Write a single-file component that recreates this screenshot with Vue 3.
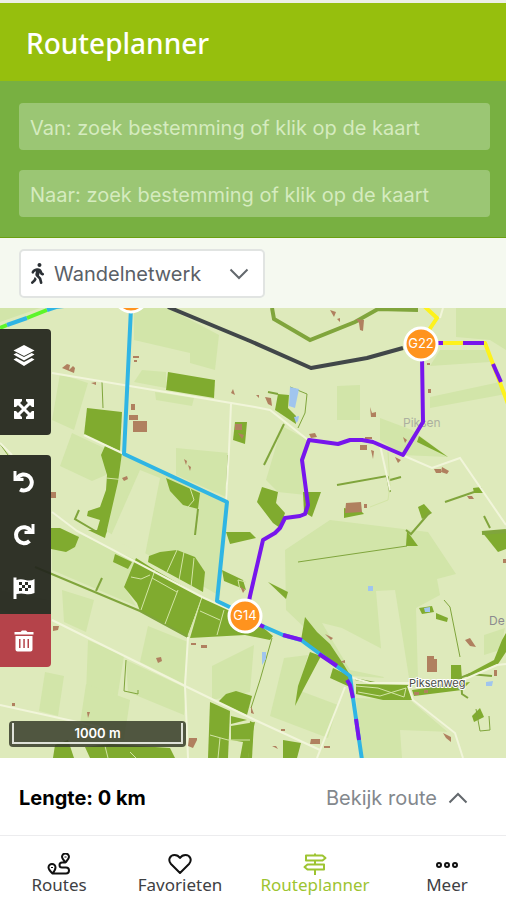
<template>
  <div class="app">
    <header class="app-header">
      <h1>Routeplanner</h1>
    </header>

    <form class="search" @submit.prevent>
      <input v-model="van" type="text" aria-label="Van" placeholder="Van: zoek bestemming of klik op de kaart">
      <input v-model="naar" type="text" aria-label="Naar" placeholder="Naar: zoek bestemming of klik op de kaart">
    </form>

    <div class="filter-bar">
      <div class="network">
        <svg class="walk-icon" viewBox="0 0 320 512" aria-hidden="true">
          <path d="M208 96c26.500 0 48-21.500 48-48S234.500 0 208 0s-48 21.500-48 48 21.500 48 48 48zm94.500 149.100l-23.300-11.800-9.700-29.400c-14.700-44.600-55.700-75.800-102.200-75.900-36-.1-55.900 10.100-93.300 25.200-21.600 8.700-39.300 25.200-49.700 46.200L17.600 213c-7.800 15.800-1.500 35 14.200 42.900 15.600 7.900 34.600 1.500 42.500-14.300L81 228c3.500-7 9.300-12.500 16.500-15.400l26.800-10.800-15.200 60.700c-5.200 20.800.4 42.900 14.900 58.800l59.900 65.400c7.200 7.900 12.300 17.400 14.900 27.700l18.300 73.300c4.300 17.100 21.700 27.600 38.800 23.300 17.100-4.300 27.600-21.700 23.300-38.800l-22.200-89c-2.600-10.300-7.700-19.900-14.900-27.700l-45.500-49.700 17.200-68.700 5.500 16.500c5.300 16.100 16.700 29.400 31.700 37l23.300 11.800c15.600 7.900 34.600 1.500 42.500-14.300 7.700-15.700 1.400-35.100-14.300-43zM73.600 385.800c-3.200 8.100-8 15.400-14.200 21.500l-50 50.100c-12.500 12.500-12.500 32.800 0 45.300s32.700 12.500 45.200 0l59.400-59.400c6.100-6.100 10.900-13.400 14.200-21.500l13.500-33.800c-55.300-60.300-38.700-41.800-47.400-53.700l-20.700 51.500z" />
        </svg>
        <select v-model="netwerk" aria-label="Netwerk">
          <option>Wandelnetwerk</option>
          <option>Fietsnetwerk</option>
        </select>
        <svg class="chevron" viewBox="0 0 20 12" aria-hidden="true"><path d="M1.500 1.500 10 10l8.500-8.500" /></svg>
      </div>
    </div>

    <main class="map">
      <svg class="map-canvas" viewBox="0 308 506 450" preserveAspectRatio="xMidYMid slice" role="img" aria-label="Kaart">
        <polygon v-for="p in velden" :key="p" class="veld" :points="p" />
        <polygon v-for="p in lichteVelden" :key="p" class="veld-licht" :points="p" />
        <polygon v-for="p in bossen" :key="p" class="bos" :points="p" />
        <polyline v-for="h in hagen" :key="h.p" class="haag" :points="h.p" :stroke-width="h.w" />
        <polyline v-for="p in paden" :key="p" class="pad" :points="p" />
        <polyline v-for="p in wegen" :key="p" class="weg" :points="p" />
        <polygon v-for="p in water" :key="p" class="water" :points="p" />
        <path v-for="g in gebouwen" :key="g" class="gebouw" :d="g" />

        <text class="plaats vaag" x="403" y="427">Piksen</text>
        <text class="plaats" x="489" y="625">De</text>
        <text class="straat" x="409" y="687">Piksenweg</text>

        <polyline v-for="r in routes" :key="r.p" class="route" :class="r.kleur" :points="r.p" />

        <g v-for="k in knooppunten" :key="k.x" class="knooppunt">
          <circle :cx="k.x" :cy="k.y" r="16" />
          <text :x="k.x" :y="k.y + 4">{{ k.naam }}</text>
        </g>
      </svg>

      <div class="tools">
        <div class="tool-group">
          <button type="button" aria-label="Kaartlagen">
            <svg viewBox="0 0 22 22">
              <path d="M11 0 21.500 5.500 11 11 .5 5.500z" />
              <path d="m.5 9.500 2.800-1.400L11 12l7.700-3.900 2.800 1.400L11 15.500z" />
              <path d="m.5 14.500 2.800-1.400L11 17l7.700-3.900 2.800 1.400L11 21z" />
            </svg>
          </button>
          <button type="button" aria-label="Volledig scherm">
            <svg viewBox="0 0 22 22">
              <path d="M1.500 1H9v2L3 9H1V1.500zM13 1h7.500l.5.500V9h-2l-6-6zM1 13h2l6 6v2H1.500L1 20.500zM19 13h2v7.500l-.5.500H13v-2z" />
              <path class="cross" d="m4 4 14 14M18 4 4 18" />
            </svg>
          </button>
        </div>
        <div class="tool-group">
          <button type="button" aria-label="Ongedaan maken">
            <svg viewBox="0 0 22 22">
              <path class="arc" d="M4.500 6.500A8 8 0 1 1 7 18.500" />
              <path d="M.5 0v10h10V7L5 6.500 3.500 5V0z" />
            </svg>
          </button>
          <button type="button" aria-label="Opnieuw">
            <svg viewBox="0 0 22 22">
              <path class="arc" d="M17.500 6.500A8 8 0 1 0 16.500 17" />
              <path d="M21.500 0v10h-10V7L17 6.500 18.500 5V0z" />
            </svg>
          </button>
          <button type="button" aria-label="Route voltooien">
            <svg viewBox="0 0 22 22">
              <path d="M.5.500h3V3q4-1.500 9 0t9-1v14q-5 2-9 1t-9 0v5h-3z" />
              <path class="checks" d="M6 5h3v3H6zM12 5h3v3h-3zM9 8h3v3H9zM15 8h3v3h-3zM6 11h3v3H6zM12 11h3v3h-3z" />
            </svg>
          </button>
          <button type="button" class="danger" aria-label="Wis route">
            <svg viewBox="0 0 22 22">
              <path d="M1.500 2h6L9 .5h4L14.500 2h6v2.500h-19z" />
              <path fill-rule="evenodd" d="M2.500 6h17v13.500q0 2-2 2h-13q-2 0-2-2zM6 9v9h1.500V9zm4.300 0v9h1.500V9zm4.200 0v9H16V9z" />
            </svg>
          </button>
        </div>
      </div>

      <div class="scale"><span>1000 m</span></div>
    </main>

    <section class="summary">
      <strong>Lengte: {{ lengte }} km</strong>
      <button type="button">
        Bekijk route
        <svg class="chevron" viewBox="0 0 20 12" aria-hidden="true"><path d="M1.500 10.500 10 2l8.500 8.500" /></svg>
      </button>
    </section>

    <nav class="tabs">
      <a href="#routes">
        <svg viewBox="0 0 24 22" aria-hidden="true">
          <path d="M18.500 9.500c-2-2.500-3.500-4-3.500-5.500a3.500 3.500 0 0 1 7 0c0 1.500-1.500 3-3.500 5.500zM5.500 20.500C3 18 1.500 16.500 1.500 14.500a3.500 3.500 0 0 1 7 0c0 2-1 3.500-3 6zH19a3 3 0 0 0 0-6h-4a2.500 2.500 0 0 1 0-5h3.500" />
          <path d="M18.500 3.500v1M5 14v1" />
        </svg>
        <span>Routes</span>
      </a>
      <a href="#favorieten">
        <svg viewBox="0 0 24 22" aria-hidden="true">
          <path d="M12 20 3 11C-.5 7 2 2 6.500 2 9 2 11 3.500 12 5c1-1.500 3-3 5.500-3C22 2 24.500 7 21 11z" />
        </svg>
        <span>Favorieten</span>
      </a>
      <a href="#routeplanner" class="active">
        <svg viewBox="0 0 24 22" aria-hidden="true">
          <path d="M3 2.500h16.500L22.500 5l-3 2.500H3zM21 11.500H4.500l-3 2.500 3 2.500H21zM12 .5v2M12 7.500v4M12 16.500V22" />
        </svg>
        <span>Routeplanner</span>
      </a>
      <a href="#meer">
        <svg viewBox="0 0 24 22" aria-hidden="true">
          <circle cx="4" cy="12" r="2" /><circle cx="12" cy="12" r="2" /><circle cx="20" cy="12" r="2" />
        </svg>
        <span>Meer</span>
      </a>
    </nav>
  </div>
</template>

<script setup>
import { ref } from 'vue'

const van = ref('')
const naar = ref('')
const netwerk = ref('Wandelnetwerk')
const lengte = ref(0)

const knooppunten = [
  { x: 131, y: 296, naam: '' },
  { x: 421, y: 344, naam: 'G22' },
  { x: 245, y: 616, naam: 'G14' }
]

const velden = [
  '134,308 168,308 219,335 215,370 190,363 190,353 134,340',
  '456,308 506,308 506,350 490,340 456,337',
  '440,350 488,350 490,362 430,366',
  '430,397 500,382 506,394 430,408',
  '337,386 360,385 360,420 337,420',
  '142,370 166,372 166,388 134,382',
  '155,392 194,398 192,406 156,400',
  '60,374 88,383 74,430 52,420',
  '72,433 104,448 106,475 92,481 60,466',
  '176,448 229,453 226,497 176,475',
  '380,418 412,430 448,457 402,455 380,440',
  '282,426 308,440 302,460 306,495 278,492 266,480',
  '122,455 226,502 220,596 150,556 106,531',
  '0,308 40,308 0,322',
  '80,534 136,560 124,586 136,606 52,570 52,545',
  '285,550 330,520 428,532 456,574 437,579 440,595 416,608 418,680 352,676 305,628 286,610',
  '62,590 94,600 86,632 64,622',
  '148,626 188,642 184,684 140,662',
  '88,640 124,656 116,706 86,694',
  '45,672 64,676 58,716 39,711',
  '86,684 130,700 124,740 80,724',
  '126,660 186,688 184,715 128,692',
  '212,666 254,645 250,692 212,700',
  '356,698 410,700 450,734 455,758 362,758',
  '284,658 308,655 298,690 338,705 328,738 270,716',
  '484,635 505,628 500,650 484,655',
  '0,610 50,628 50,600 0,590'
]

const lichteVelden = [
  '376,591 395,590 410,684 384,682',
  '322,623 342,628 384,650 384,677 350,670',
  '400,730 452,732 462,758 402,758',
  '140,470 160,478 145,555 110,538'
]

const bossen = [
  '168,372 215,380 214,398 166,390',
  '87,408 122,412 120,451 84,435',
  '105,446 122,453 118,482 106,534 97,530 100,520 87,516 88,511 100,507 106,490 107,475 101,455',
  '166,478 200,493 198,509 183,505 170,491',
  '235,422 247,422 245,444 233,440',
  '51,528 60,528 79,537 75,547 66,552 51,549',
  '88,530 107,530 105,538',
  '115,554 132,562 128,569 113,562',
  '136,558 155,570 202,597 187,637 140,611 137,603 124,587',
  '149,556 160,552 177,550 195,557 205,572 203,592 148,562',
  '202,597 234,610 260,625 273,636 270,640 245,635 190,638',
  '222,570 243,580 246,590 224,581',
  '226,532 250,532 256,538 230,544',
  '218,702 226,694 236,691 252,696 247,715',
  '210,702 230,711 228,758 208,758',
  '231,716 247,720 231,724',
  '231,726 255,722 251,740 248,758 240,758 243,742 231,740',
  '55,745 68,740 74,758 53,758',
  '85,747 110,744 170,748 175,758 90,758',
  '268,582 288,592 286,599',
  '305,617 317,632 330,644 344,665 350,675 330,662 301,640',
  '310,652 321,656 303,690 295,706 298,686',
  '333,668 352,677 350,687 330,678',
  '356,684 408,685 412,700 383,700 356,694',
  '412,690 470,682 462,690 414,696',
  '407,531 418,546 406,546',
  '482,532 506,531 506,549 498,552',
  '419,608 432,606 434,612 422,614',
  '436,613 448,618 447,622 436,619',
  '506,633 506,652 498,664 468,677 464,676 494,660 502,640',
  '451,665 461,665 462,680 451,680',
  '283,740 301,743 297,758 283,758',
  '250,721 254,723 252,758 248,758',
  '472,716 480,708 484,717 474,722',
  '278,394 289,395 288,408 296,416 296,424 275,410',
  '262,487 278,492 276,503 285,513 280,528 273,523 257,502',
  '303,492 321,492 312,517 304,512',
  '419,436 448,457 417,442',
  '344,508 362,512 364,514 344,518',
  '418,507 424,504 432,513 422,519',
  '473,488 481,487 484,493 474,493'
]

const hagen = [
  { p: '272,308 274,319 310,340 355,322 378,309 418,310', w: 4 },
  { p: '268,392 278,394', w: 2 },
  { p: '290,387 307,394 305,413 298,428', w: 1 },
  { p: '284,424 264,465', w: 2 },
  { p: '337,485 387,476 390,480 401,477', w: 2 },
  { p: '387,476 390,492', w: 2 },
  { p: '445,502 474,492', w: 2 },
  { p: '430,512 411,534 406,530', w: 2 },
  { p: '484,516 490,528', w: 2 },
  { p: '482,533 506,531', w: 4 },
  { p: '298,562 407,546', w: 1 },
  { p: '444,600 450,607 460,657', w: 1 },
  { p: '35,567 140,611 188,637', w: 2 },
  { p: '102,578 96,591', w: 2 },
  { p: '126,660 124,691 138,694 138,690', w: 1 },
  { p: '102,382 103,408', w: 1 },
  { p: '228,455 226,499', w: 1 },
  { p: '198,509 195,535', w: 2 },
  { p: '79,510 75,519 97,532', w: 2 },
  { p: '272,638 260,680 251,708', w: 1 },
  { p: '355,679 375,683', w: 2 },
  { p: '476,709 480,731 490,730 489,716', w: 1 },
  { p: '461,678 462,694 468,698', w: 2 },
  { p: '0,444 8,455', w: 1 },
  { p: '424,692 470,674 492,676', w: 2 }
]

const paden = [
  '177,550 167,572',
  '184,552 179,580',
  '194,558 191,587',
  '131,577 141,579 150,575',
  '155,570 141,610',
  '152,578 177,592',
  '178,590 165,624',
  '202,597 188,637',
  '200,611 220,620',
  '224,610 217,635',
  '356,686 378,688 404,697 406,688 380,696 358,692',
  '210,735 228,740 250,740',
  '220,738 218,758',
  '106,478 126,480',
  '190,488 194,500 188,507',
  '105,746 108,758',
  '130,752 136,758',
  '388,452 390,485 388,500 370,507',
  '240,590 238,580 246,582'
]

const wegen = [
  '52,373 255,407 270,410 308,440',
  '84,435 124,454',
  '402,455 432,468 460,458 506,525',
  '380,445 390,490',
  '231,404 229,450 226,500',
  '52,512 77,531 202,597 235,612',
  '52,620 185,686 255,720 320,750',
  '188,637 185,686 188,758',
  '0,705 100,727',
  '345,687 317,758',
  '350,677 370,683 408,683 463,680 497,665 506,664',
  '408,686 413,700 455,733 463,758',
  '378,445 373,440',
  '440,318 443,308',
  '0,443 12,455'
]

const water = [
  '290,387 299,389 295,408 289,406',
  '294,417 299,416 298,421 296,423',
  '368,586 373,586 373,591 368,591',
  '424,608 430,607 430,612 425,612',
  '262,652 266,652 266,659 262,665',
  '486,682 493,681 492,686 486,686'
]

const gebouwen = [
  'M133 421h14v11h-14zM129 415h9v5h-9zM131 404h4v6h-4z',
  'M133 356h6v2h-6zM134 360h3v2h-3z',
  'M62 368l5-4 3 1-1 5 4-4 2 2-1 5zM91 383l5-1v3z',
  'M235 424h7v6h-7zM238 433l6 2-2 4z',
  'M184 459l3 2-1 4zM188 465l3 2-1 4z',
  'M122 478l5-2 1 3-4 2zM50 492h6v6h-5zM231 393l2-4 2 6z',
  'M330 310l6 2-2 5zM356 319l8 1-1 11-3-1-1-7zM337 319l3-1v4z',
  'M265 397l6 1 1 8-4-2zM256 395h3v3z',
  'M370 407l2 6 4-1v5h-5z',
  'M346 503l15-1 1 10-17 1zM364 504h3v4h-3z',
  'M309 434l6-1 2 4-6 1zM360 445h7v5h-7zM371 450l3 1-1 8zM365 437h7v2h-7z',
  'M403 437l4 3-2 3zM395 457l6 3-3 3zM428 389h3v4h-3zM427 363h3v2h-3z',
  'M434 469h7v4h-5zM442 467l7 4-2 3-6-2zM467 496h5l2 3h-5z',
  'M427 656h7v3h3v13h-10zM414 692h5v3h-5zM424 690h4v3h-4z',
  'M465 640l5-2 4 6 2 3-6-1zM494 670h3v6h-3z',
  'M321 628l3 3M325 634l8 4-2 2zM340 662l5-2v3z',
  'M191 643h5v2h-5zM201 645h6v3h-6zM156 658l5-1 1 4-4 2z',
  'M189 738h8v2l-4 8-5-2z',
  'M311 739h9v5h-10zM324 746h6v2h-6z',
  'M443 733l8 4v5l-5-4zM281 729h4v2h-4zM272 746h4l2 3z',
  'M53 626h6l-1 4-5 1zM81 712l3 6M87 712h3l-2 6zM12 703h3v3h-3z',
  'M240 586l5 4-2 3zM251 706l3 8-3-1zM503 559h3v4h-3z'
]

const routes = [
  { kleur: 'groen', p: '0,328 7,325' },
  { kleur: 'cyaan', p: '7,325 27,318' },
  { kleur: 'groen', p: '27,318 47,310' },
  { kleur: 'cyaan', p: '47,310 56,307 64,306' },
  { kleur: 'donker', p: '168,307 250,341 311,368 367,358 403,348' },
  { kleur: 'cyaan', p: '131,308 124,454 227,502 217,601 240,612' },
  { kleur: 'paars', p: '422,356 423,422 403,455 373,442 362,440 350,440 338,444 309,440 302,460 308,505 305,514 300,516 285,518 280,528 275,533 263,540 250,596 248,606' },
  { kleur: 'geel', p: '424,306 437,318 429,330' },
  { kleur: 'geel', p: '436,343 485,343 508,404' },
  { kleur: 'paars', p: '438,343 443,343' },
  { kleur: 'paars', p: '463,343 484,343' },
  { kleur: 'paars', p: '493,364 501,382' },
  { kleur: 'cyaan', p: '258,624 283,635 301,640 350,676 353,698 362,760' },
  { kleur: 'paars', p: '258,624 264,627' },
  { kleur: 'paars', p: '283,635 302,640' },
  { kleur: 'paars', p: '319,654 337,666' },
  { kleur: 'paars', p: '347,680 350,685 353,698' },
  { kleur: 'paars', p: '356,719 359,740' }
]
</script>

<style scoped>
.app { display: flex; flex-direction: column; min-height: 100vh; background: #fff; font-family: Inter, "Liberation Sans", sans-serif; }
input, select, button { font: inherit; color: inherit; }

.app-header { display: flex; align-items: center; height: 78px; padding: 0 26px; border-top: 3px solid #ecefe6; background: #96bf0d; }
.app-header h1 { margin: 0; padding-top: 2px; color: #fff; font: 500 28px/40px "Noto Sans", "Open Sans", sans-serif; }

.search { display: flex; flex-direction: column; gap: 20px; padding: 22px 16px 20px 19px; background: #78b041; border-bottom: 1px solid #6ba012; }
.search input { box-sizing: border-box; width: 100%; height: 47px; padding: 3px 11px 0; border: 0; border-radius: 4px; background: #9bc674; color: #fff; font-size: 20px; }
.search input::placeholder { color: #d5ebbf; opacity: 1; }

.filter-bar { display: flex; padding: 11px 19px 10px; background: #f5f9f0; }
.network { display: flex; align-items: center; box-sizing: border-box; width: 246px; height: 49px; padding: 0 14px 0 9px; border: 2px solid #e1e4e2; border-radius: 5px; background: #fff; }
.walk-icon { width: 15px; height: 21px; fill: #2b3035; }
.network select { flex: 1; min-width: 0; margin-left: 9px; padding: 0; border: 0; background: transparent; appearance: none; color: #5a6067; font-size: 20px; }
.chevron { flex: none; width: 20px; height: 12px; fill: none; stroke: #63686d; stroke-width: 2; }

.map { position: relative; flex: 1; min-height: 400px; overflow: hidden; background: #deeabb; }
.map-canvas { position: absolute; inset: 0; width: 100%; height: 100%; }
.veld { fill: #d2e5a9; }
.veld-licht { fill: #deeabb; }
.bos { fill: #80ab2f; }
.haag { fill: none; stroke: #80a53c; }
.pad { fill: none; stroke: #d3e5a6; stroke-width: 1; }
.weg { fill: none; stroke: #f1f5da; stroke-width: 2; }
.water { fill: #a0c5ee; }
.gebouw { fill: #b0805f; }
.plaats { fill: #8b8b8f; font-size: 12px; }
.vaag { opacity: 0.6; }
.straat { fill: #4c4f48; stroke: #fff; stroke-width: 2; paint-order: stroke; font-size: 11px; }
.route { fill: none; stroke-width: 4; stroke-linejoin: round; }
.cyaan { stroke: #2fb5e4; }
.paars { stroke: #7716ec; }
.donker { stroke: #414749; }
.geel { stroke: #fdf21c; }
.groen { stroke: #5df52a; }
.knooppunt circle { fill: #ff931e; stroke: #fff; stroke-width: 3; }
.knooppunt text { fill: #fff; font: 13px Inter, sans-serif; text-anchor: middle; }

.tools { position: absolute; top: 21px; left: 0; display: flex; flex-direction: column; gap: 20px; }
.tool-group { display: flex; flex-direction: column; width: 51px; border-radius: 0 4px 4px 0; overflow: hidden; }
.tool-group button { display: flex; align-items: center; height: 53px; padding: 0 13px; border: 0; background: rgba(34, 37, 29, 0.93); }
.tool-group .danger { background: #b5434a; }
.tool-group svg { width: 22px; height: 22px; fill: #fff; }
.tool-group .arc { fill: none; stroke: #fff; stroke-width: 4; }
.tool-group .cross { fill: none; stroke: #fff; stroke-width: 3; }
.tool-group .checks { fill: #2c2f27; }

.scale { position: absolute; left: 9px; bottom: 11px; box-sizing: border-box; width: 177px; height: 26px; padding: 2px 3px 3px; border-radius: 4px; background: rgba(55, 60, 42, 0.85); }
.scale span { display: block; box-sizing: border-box; height: 21px; border: 2px solid #dfe2d9; border-top: 0; color: #fff; font-size: 13px; font-weight: 600; line-height: 21px; text-align: center; }

.summary { display: flex; align-items: center; justify-content: space-between; height: 75px; padding: 2px 38px 0 19px; border-bottom: 1px solid #ececee; }
.summary strong { color: #000; font-size: 20px; font-weight: 700; }
.summary button { display: flex; align-items: center; gap: 11px; padding: 0; border: 0; background: none; color: #83888d; font-size: 20px; }

.tabs { display: grid; grid-template-columns: 118fr 124fr 146fr 118fr; padding: 17px 0 5px; }
.tabs a { display: flex; flex-direction: column; align-items: center; color: #3e4043; font: 17px/20px "Noto Sans", "Open Sans", sans-serif; text-decoration: none; }
.tabs svg { width: 24px; height: 22px; fill: none; stroke: #111; stroke-width: 2; stroke-linejoin: round; }
.tabs .active { color: #9dc431; }
.tabs .active svg { stroke: #9dc431; }
</style>

<style>
body { margin: 0; }
</style>
